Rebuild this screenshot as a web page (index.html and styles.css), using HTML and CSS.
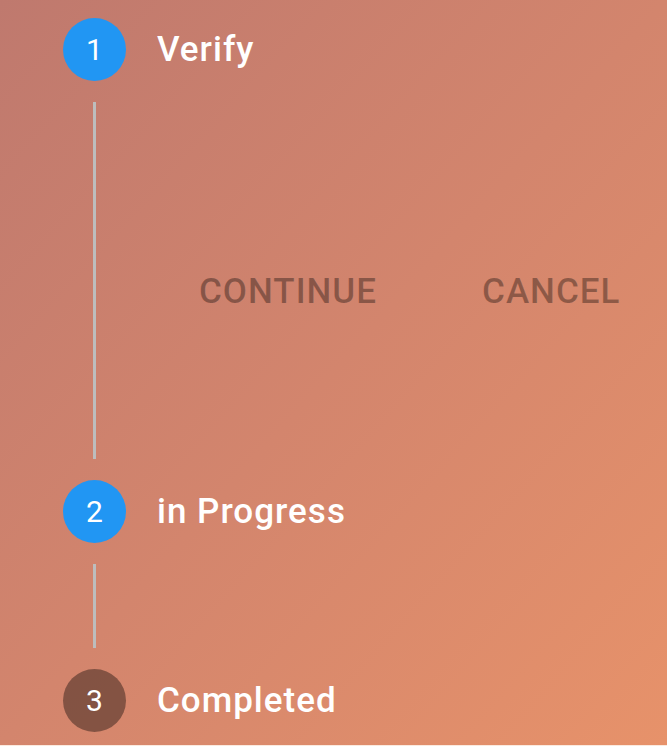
FILE: index.html
```html
<!DOCTYPE html>
<html lang="en">
<head>
<meta charset="utf-8">
<title>Stepper</title>
<link rel="stylesheet" href="styles.css">
</head>
<body>
<main class="screen">
  <section class="stepper">
    <div class="step">
      <div class="circle active">1</div>
      <div class="title">Verify</div>
    </div>
    <div class="connector long">
      <div class="rail"><div class="line"></div></div>
      <div class="content">
        <div class="actions">
          <button class="btn">CONTINUE</button>
          <button class="btn">CANCEL</button>
        </div>
      </div>
    </div>
    <div class="step">
      <div class="circle active">2</div>
      <div class="title">in Progress</div>
    </div>
    <div class="connector short">
      <div class="rail"><div class="line"></div></div>
    </div>
    <div class="step">
      <div class="circle inactive">3</div>
      <div class="title">Completed</div>
    </div>
  </section>
</main>
</body>
</html>
```
FILE: styles.css
```css
html, body {
  margin: 0;
  padding: 0;
}
body {
  width: 667px;
  height: 746px;
  background: #fbeadf;
  font-family: Roboto, "Noto Sans", sans-serif;
  overflow: hidden;
}
.screen {
  height: 745px;
  background: linear-gradient(to bottom right, #bf796e 0%, #d3856d 50%, #e7926a 100%);
}
.stepper {
  display: flex;
  flex-direction: column;
  padding-top: 18px;
  padding-left: 63px;
}
.step {
  display: flex;
  align-items: center;
  height: 63px;
}
.circle {
  width: 63px;
  height: 63px;
  border-radius: 50%;
  display: flex;
  align-items: center;
  justify-content: center;
  color: #ffffff;
  font-size: 30px;
  font-weight: 400;
  flex-shrink: 0;
}
.circle.active {
  background: #2196f3;
}
.circle.inactive {
  background: rgba(0, 0, 0, 0.38);
}
.title {
  margin-left: 31px;
  color: #ffffff;
  font-size: 35px;
  font-weight: 500;
  letter-spacing: 1px;
}
.connector {
  display: flex;
}
.rail {
  width: 63px;
  padding: 21px 0;
  display: flex;
  justify-content: center;
  flex-shrink: 0;
}
.line {
  width: 3px;
  background: #bdbdbd;
}
.connector.long .line {
  height: 357px;
}
.connector.short .line {
  height: 84px;
}
.content {
  padding-top: 190px;
  padding-left: 73px;
}
.actions {
  display: flex;
  gap: 105px;
}
.btn {
  border: none;
  background: none;
  padding: 0;
  margin: 0;
  font-family: Roboto, "Noto Sans", sans-serif;
  font-size: 35px;
  font-weight: 500;
  line-height: normal;
  letter-spacing: 1px;
  color: rgba(0, 0, 0, 0.34);
}
```
